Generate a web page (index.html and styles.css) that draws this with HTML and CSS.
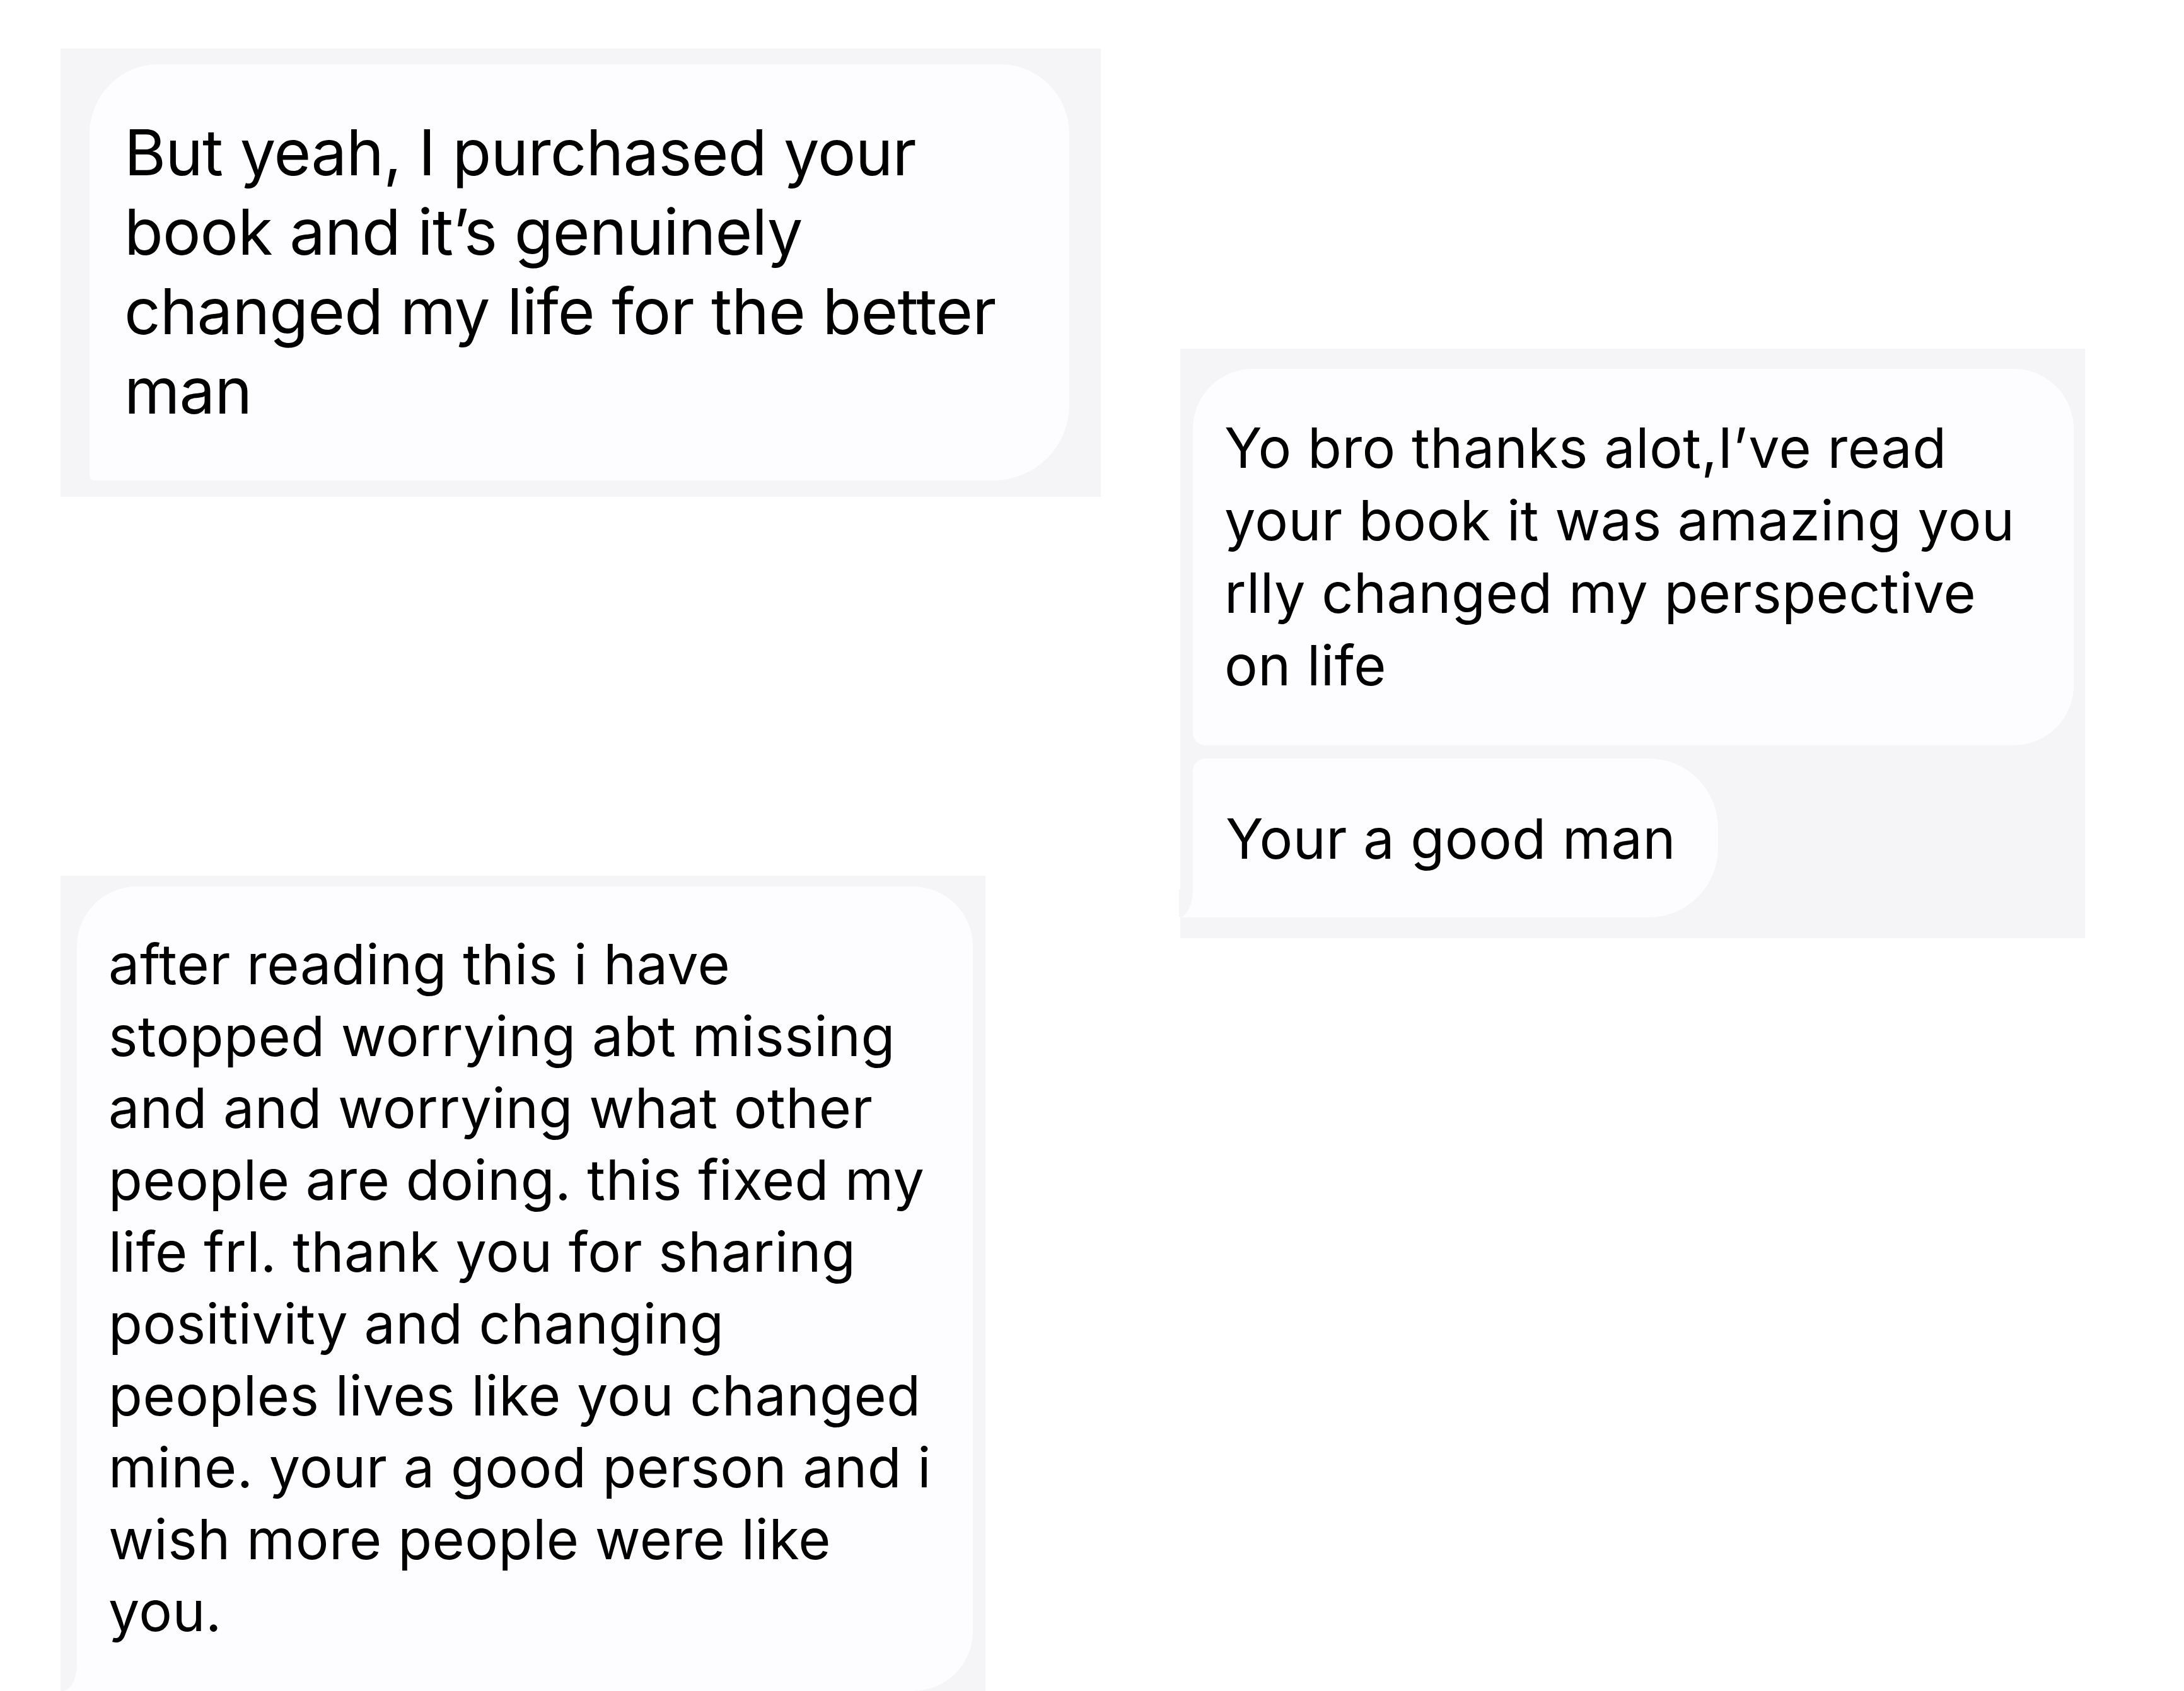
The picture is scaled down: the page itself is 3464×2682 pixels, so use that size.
FILE: index.html
```html
<!DOCTYPE html>
<html lang="en">
<head>
<meta charset="utf-8">
<title>Messages</title>
<link rel="stylesheet" href="styles.css">
</head>
<body>
<div class="canvas">
  <div class="col-left">
    <div class="panel panel-one">
      <div class="bubble bubble-one">But yeah, I purchased your<br>book and it’s genuinely<br>changed my life for the better<br>man</div>
    </div>
    <div class="panel panel-three">
      <div class="bubble bubble-three tail">after reading this i have<br>stopped worrying abt missing<br>and and worrying what other<br>people are doing. this fixed my<br>life frl. thank you for sharing<br>positivity and changing<br>peoples lives like you changed<br>mine. your a good person and i<br>wish more people were like<br>you.</div>
    </div>
  </div>
  <div class="col-right">
    <div class="panel panel-two">
      <div class="bubble bubble-two-a">Yo bro thanks alot,I’ve read<br>your book it was amazing you<br>rlly changed my perspective<br>on life</div>
      <div class="bubble bubble-two-b tail">Your a good man</div>
    </div>
  </div>
</div>
</body>
</html>
```

FILE: styles.css
```css
html, body {
  margin: 0;
  padding: 0;
  background: #ffffff;
}

body {
  width: 3464px;
  height: 2682px;
  overflow: hidden;
  font-family: "Inter", "Noto Sans", "Liberation Sans", sans-serif;
  color: #000000;
}

.canvas {
  display: flex;
  align-items: flex-start;
  padding-left: 96px;
}

.col-left {
  display: flex;
  flex-direction: column;
  align-items: flex-start;
  gap: 601px;
  padding-top: 77px;
  width: 1650px;
}

.col-right {
  margin-left: 126px;
  padding-top: 553px;
}

.panel {
  background: #f5f4f7;
  display: flex;
  flex-direction: column;
  align-items: flex-start;
}

.bubble {
  position: relative;
  background: #fdfcfe;
  white-space: nowrap;
  box-sizing: border-box;
}

/* panel 1 */
.panel-one {
  width: 1650px;
  box-sizing: border-box;
  padding: 25px 50px 26px 46px;
}

.bubble-one {
  width: 1554px;
  font-size: 101px;
  line-height: 126px;
  letter-spacing: -0.9px;
  padding: 76px 0 80px 55px;
  border-radius: 110px 110px 120px 8px;
}

/* panel 2 */
.panel-two {
  width: 1435px;
  box-sizing: border-box;
  padding: 32px 18px 33px 20px;
  gap: 21px;
}

.bubble-two-a,
.bubble-two-b,
.bubble-three {
  font-size: 88px;
  line-height: 115px;
  letter-spacing: 0.5px;
}

.bubble-two-a {
  width: 1397px;
  padding: 68px 0 69px 50px;
  border-radius: 95px 95px 95px 20px;
}

.bubble-two-b {
  width: 833px;
  padding: 70px 0 67px 52px;
  border-radius: 20px 110px 110px 0;
}

/* panel 3 */
.panel-three {
  width: 1467px;
  box-sizing: border-box;
  padding: 17px 20px 40px 26px;
}

.bubble-three {
  width: 1421px;
  line-height: 114px;
  padding: 66px 0 70px 50px;
  border-radius: 95px 95px 95px 0;
}

/* iMessage-style tail at the bottom-left of the last bubble */
.tail::before,
.tail::after {
  content: "";
  position: absolute;
  bottom: 0;
  left: -22px;
  width: 22px;
  height: 44px;
}

.tail::before {
  background: #fdfcfe;
}

.tail::after {
  background: #f5f4f7;
  border-bottom-right-radius: 22px 44px;
}
```
